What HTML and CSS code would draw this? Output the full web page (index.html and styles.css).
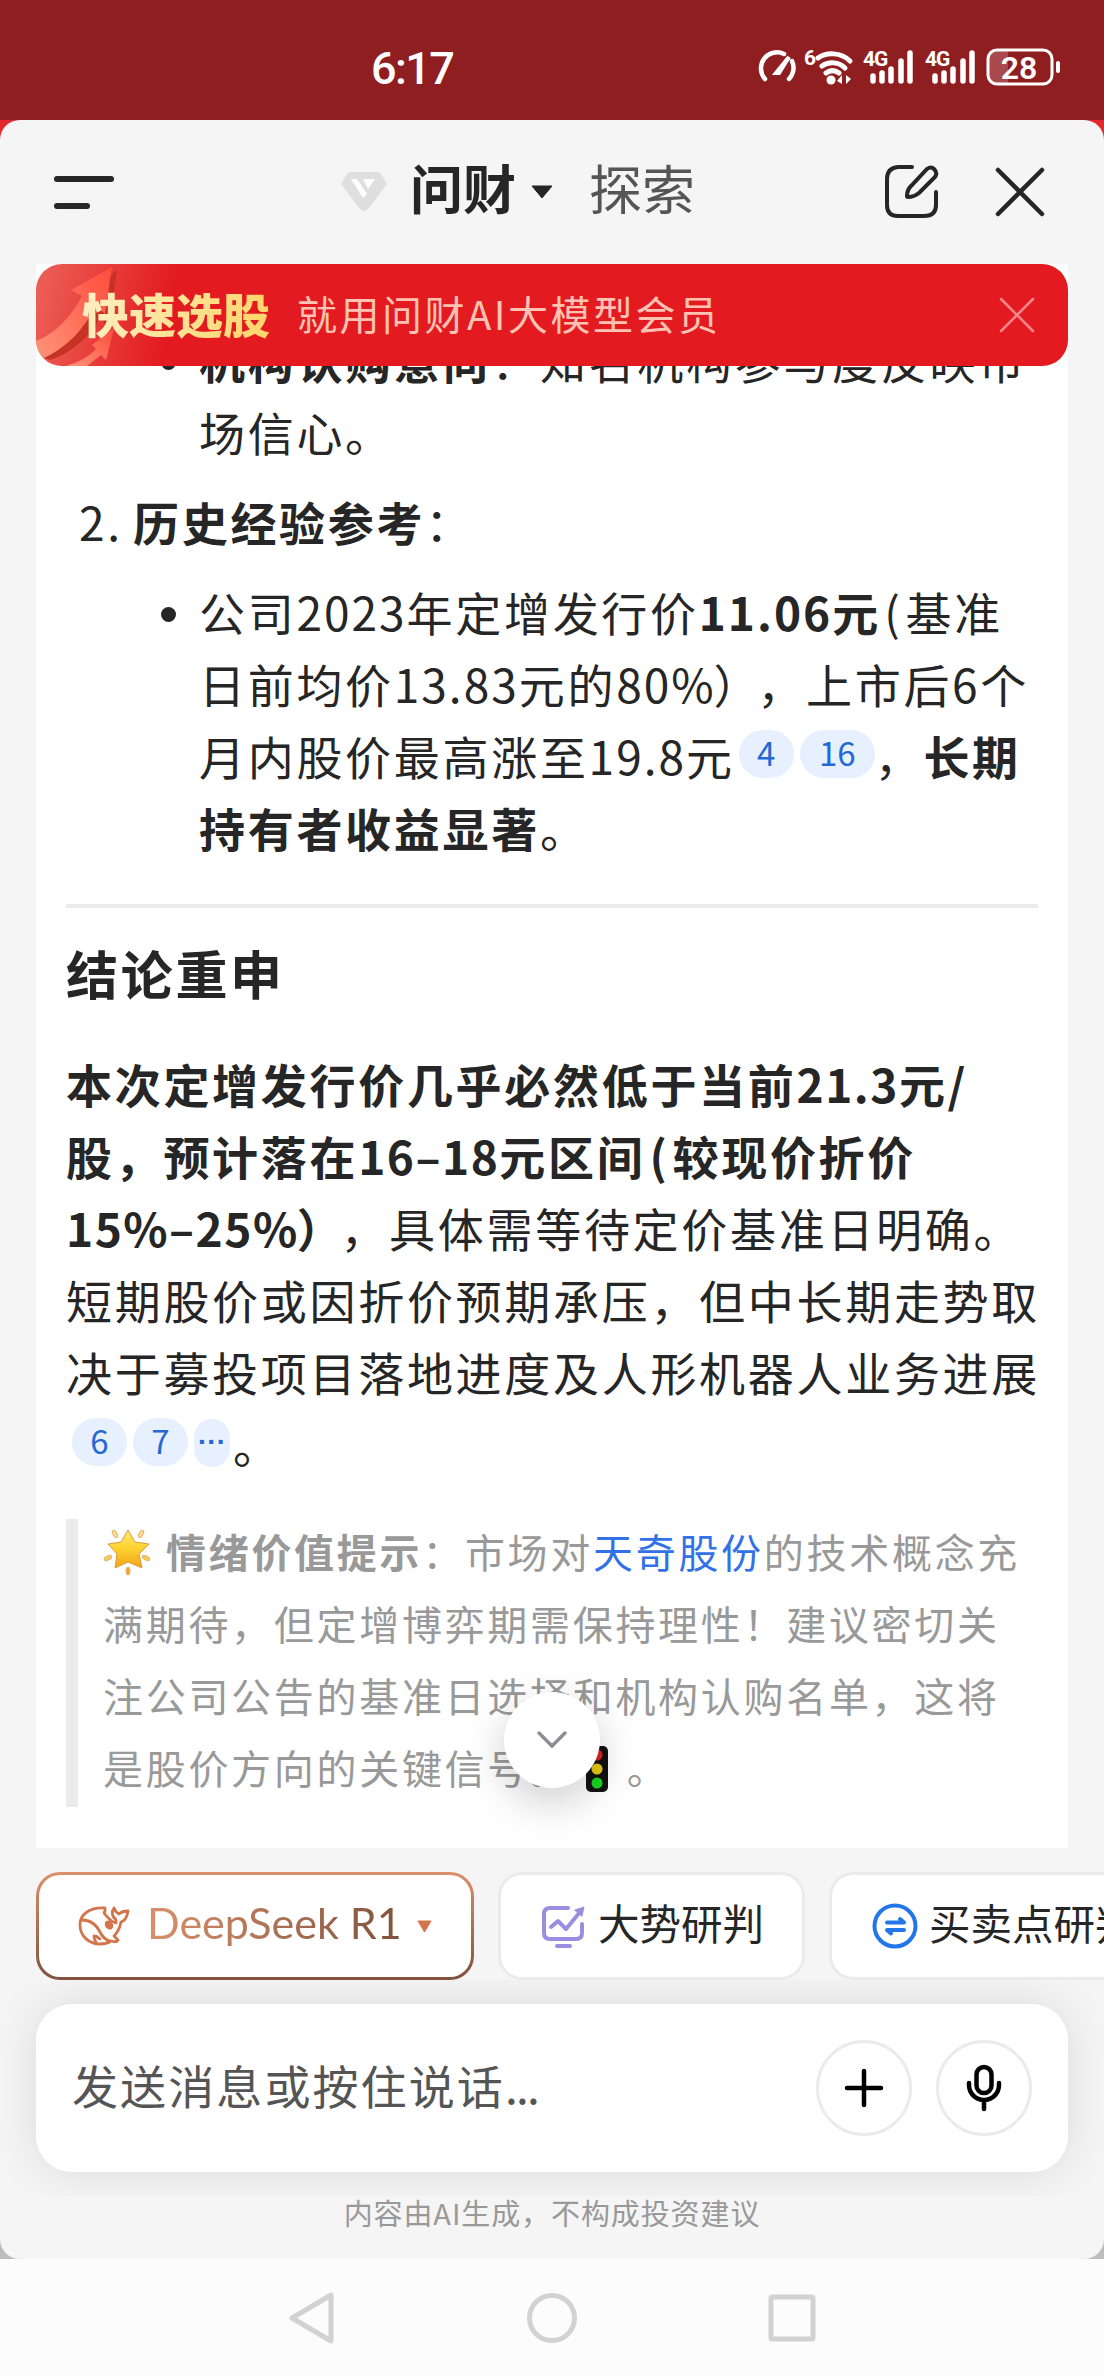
FILE: index.html
```
<!DOCTYPE html>
<html lang="zh-CN">
<head>
  <meta charset="UTF-8">
  <meta name="viewport" content="width=device-width, initial-scale=1.0">
  <title>问财</title>
  <link rel="stylesheet" href="styles.css">
</head>
<body>

  <div class="status-bar">
    <div class="clock">6:17</div>
    <svg class="status-icons" viewBox="755 40 310 55" fill="none" stroke="#fff" stroke-linecap="round">
      <path d="M765 79a16 16 0 0 1 19-25M792 61a16 16 0 0 1-3 18" stroke-width="4.5"/>
      <path d="M789 57L776 73l3 0z" stroke-width="4" fill="#fff"/>
      <path d="M818 58c8-6 23-6 32 3M822 66c7-5 17-4 23 2M826 73c4-3 9-3 13 0" stroke-width="5"/>
      <circle cx="831" cy="80" r="4.5" fill="#fff" stroke="none"/>
      <path d="M837 81l5-6v9M846 75v9l5-5z" fill="#fff" stroke="none"/>
      <text class="net" x="804" y="65">6</text>
      <text class="net" x="863" y="66">4G</text>
      <path d="M873 76v5M882 73v8M891 69v12M901 61v20M910 53v28" stroke-width="5.5"/>
      <text class="net" x="925" y="66">4G</text>
      <path d="M935 76v5M944 73v8M953 69v12M963 61v20M972 53v28" stroke-width="5.5"/>
      <path d="M1008 51h-12a7 7 0 0 0-7 7v18a7 7 0 0 0 7 7h12z" fill="#a9494e" stroke="none"/>
      <rect x="988" y="50" width="64" height="34" rx="9" stroke-width="3"/>
      <path d="M1058 63v8" stroke-width="4"/>
      <text class="level" x="1019" y="79">28</text>
    </svg>
  </div>

  <div class="app">
    <div class="sheet">
      <div class="header">
        <div class="menu"><span></span><span class="short"></span></div>
        <div class="tabs">
          <svg class="logo" width="46" height="42" viewBox="0 0 46 42">
            <path d="M9 1h28q2 0 3 2l6 10-19 25q-4 4-8 0L0 13 6 3q1-2 3-2z" fill="#dfdfdf"/>
            <path d="M10 8h6l10 15-4 4zM22 8h12l-7 10z" fill="#fff"/>
          </svg>
          <span class="tab active">问财</span>
          <svg class="caret" width="24" height="14" viewBox="0 0 24 14"><path d="M2 1h20L12 13z" fill="#262626" stroke="#262626" stroke-linejoin="round"/></svg>
          <span class="tab">探索</span>
        </div>
        <div class="actions">
          <svg width="56" height="56" viewBox="0 0 56 56" fill="none" stroke="#262626" stroke-width="4" stroke-linecap="round">
            <path d="M28 3H14Q3 4 3 15v26Q3 52 14 52h26Q52 52 52 41V28"/>
            <path d="M23 32q0-6 4-10L43 5q4-3 7 0 4 4 1 8L35 29q-5 4-11 4-1 0-1-1z"/>
          </svg>
          <svg width="50" height="50" viewBox="0 0 50 50" stroke="#262626" stroke-width="4.5" stroke-linecap="round"><path d="M3 3l44 44M47 3L3 47"/></svg>
        </div>
      </div>

      <div class="chat">
        <div class="banner">
          <svg class="arrow" width="120" height="102" viewBox="0 0 120 102">
            <defs>
              <linearGradient id="up" x1="0" y1="1" x2="1" y2="0">
                <stop offset="0" stop-color="#ff9478"/>
                <stop offset="1" stop-color="#ff4b3c"/>
              </linearGradient>
            </defs>
            <path d="M81 5l-8 62-8-14Q45 86 14 96l-8-3z" fill="#c63324"/>
            <path d="M76 3L35 26l11 6Q28 66 0 77v12l8 5Q42 78 60 41l9 9z" fill="url(#up)"/>
            <path d="M78 64l-8 32-5-5-14 11H30q20-6 30-17l-4-4z" fill="url(#up)"/>
          </svg>
          <b>快速选股</b>
          <span>就用问财AI大模型会员</span>
          <svg class="close" width="36" height="36" viewBox="0 0 36 36" stroke="#f7868a" stroke-width="2.5" stroke-linecap="round"><path d="M2 2l32 32M34 2L2 34"/></svg>
        </div>

        <ul>
          <li><strong>机构认购意向</strong>：知名机构参与度反映市<br>场信心。</li>
        </ul>
        <div class="ordered"><span class="num">2.</span><strong>历史经验参考</strong>：</div>
        <ul>
          <li>公司<span class="n">2023</span>年定增发行价<strong class="n">11.06元</strong><span class="lp">(</span>基准<br>日前均价<span class="n">13.83</span>元的<span class="n">80%</span><span class="rp">）</span>，上市后6个<br>月内股价最高涨至<span class="n">19.8</span>元<a class="cite first">4</a><a class="cite two">16</a>，<strong>长期<br>持有者收益显著</strong>。</li>
        </ul>
        <hr>
        <h3>结论重申</h3>
        <p><strong>本次定增发行价几乎必然低于当前<span class="n">21.3</span>元/<br>股，预计落在<span class="n">16–18</span>元区间<span class="lp">(</span>较现价折价<br><span class="n">15%–25%</span><span class="rp">）</span></strong>，具体需等待定价基准日明确。<br>短期股价或因折价预期承压，但中长期走势取<br>决于募投项目落地进度及人形机器人业务进展<br><a class="cite">6</a><a class="cite">7</a><a class="cite more">···</a>。</p>

        <blockquote>
          <p><svg class="star" width="48" height="48" viewBox="0 0 48 48">
            <defs>
              <linearGradient id="gold" x1="0" y1="0" x2="0" y2="1">
                <stop offset="0" stop-color="#ffe870"/>
                <stop offset="0.5" stop-color="#fdd22e"/>
                <stop offset="1" stop-color="#f3a21b"/>
              </linearGradient>
            </defs>
            <path d="M25 1l7 12 14 2-10 10 3 14-14-6-13 6 2-14L5 15l13-2z" fill="url(#gold)" stroke="#dc9a3c" stroke-linejoin="round"/>
            <g fill="#fbdc98" stroke="#e5b366">
              <ellipse cx="12" cy="5" rx="2" ry="4" transform="rotate(-30 12 5)"/>
              <ellipse cx="38" cy="5" rx="2" ry="4" transform="rotate(30 38 5)"/>
              <ellipse cx="5" cy="29" rx="2" ry="4" transform="rotate(65 5 29)" fill="#f7c85a"/>
              <ellipse cx="43" cy="29" rx="2" ry="4" transform="rotate(-65 43 29)" fill="#f7c85a"/>
              <ellipse cx="25" cy="42" rx="2" ry="4" fill="#f0a92a"/>
            </g>
          </svg><strong>情绪价值提示</strong>：市场对<a class="stock">天奇股份</a>的技术概念充<br>满期待，但定增博弈期需保持理性！建议密切关<br>注公司公告的基准日选择和机构认购名单，这将<br>是股价方向的关键信号。<svg class="light" width="48" height="48" viewBox="0 0 48 48">
            <rect x="13" y="1" width="22" height="46" rx="5" fill="#111"/>
            <circle cx="24" cy="10" r="5.5" fill="#e02020"/>
            <circle cx="24" cy="24" r="5.5" fill="#e8c814"/>
            <circle cx="24" cy="38" r="5.5" fill="#18d820"/>
          </svg>。</p>
        </blockquote>

        <div class="to-bottom">
          <svg width="32" height="20" viewBox="0 0 32 20" fill="none" stroke="#8c8f94" stroke-width="3.5" stroke-linecap="round"><path d="M3 3l13 13L29 3"/></svg>
        </div>
      </div>

      <div class="chips">
        <div class="chip deepseek">
          <svg class="whale" width="52" height="42" viewBox="0 0 52 42" fill="none" stroke="#d2754b" stroke-width="2.8" stroke-linejoin="round" stroke-linecap="round">
            <path d="M27 3C12 2 2 9 2 20c0 11 9 19 20 19 5 0 8-1 11-3 3 1 6 1 7-1l-4-4c4-4 6-9 7-14 4-1 6-5 7-11-4 0-7 1-9 3-2-1-4-3-5-6-3 4-2 8 2 12v3c-4-1-9-6-12-10l1-2z"/>
            <path d="M4 15c9 0 15 6 18 12 2 4 5 8 10 9M18 37c-2-2-2-5-2-6 3 0 5 2 6 3"/>
            <ellipse cx="31" cy="20" rx="2.5" ry="3.5" transform="rotate(-35 31 20)" fill="#d2754b"/>
          </svg>
          <span>DeepSeek R1</span>
          <svg width="15" height="13" viewBox="0 0 15 13"><path d="M1 1h13L7.500 12z" fill="#d2754b" stroke="#d2754b" stroke-linejoin="round"/></svg>
        </div>
        <div class="chip">
          <svg width="46" height="46" viewBox="0 0 46 46" fill="none" stroke="#9b8ee0" stroke-width="4" stroke-linecap="round" stroke-linejoin="round">
            <path d="M27 5H9Q3 5 3 11v19q0 6 6 6h26q6 0 6-6v-9M16 43h13"/>
            <path d="M10 24l7-6 8 8L39 9"/>
            <path d="M34 7l9-3-2 9z" fill="#9b8ee0" stroke-width="1"/>
          </svg>
          <span>大势研判</span>
        </div>
        <div class="chip">
          <svg width="46" height="46" viewBox="0 0 46 46" fill="none" stroke="#2376ea" stroke-width="4" stroke-linecap="round" stroke-linejoin="round">
            <circle cx="23" cy="23" r="20.5"/>
            <path d="M15 19.500h17l-4-3.500M32 27H15l4 3.500"/>
          </svg>
          <span>买卖点研判</span>
        </div>
      </div>

      <div class="composer">
        <div class="input-box">
          <div class="placeholder">发送消息或按住说话<span>...</span></div>
          <div class="round">
            <svg width="40" height="40" viewBox="0 0 40 40" stroke="#000" stroke-width="4.5" stroke-linecap="round"><path d="M20 3v34M3 20h34"/></svg>
          </div>
          <div class="round">
            <svg width="40" height="50" viewBox="0 0 40 50" fill="none" stroke="#000" stroke-width="4.5" stroke-linecap="round">
              <rect x="12.500" y="4" width="15" height="26" rx="7.500"/>
              <path d="M5 20v2a15 15 0 0 0 30 0v-2M20 38v8"/>
            </svg>
          </div>
        </div>
      </div>
      <div class="disclaimer">内容由AI生成，不构成投资建议</div>
    </div>
  </div>

  <div class="nav-bar">
    <svg width="50" height="54" viewBox="0 0 50 54"><path d="M5 27L44 4v46z"/></svg>
    <svg width="54" height="54" viewBox="0 0 54 54"><circle cx="27" cy="27" r="22.5"/></svg>
    <svg width="50" height="50" viewBox="0 0 50 50"><rect x="4" y="4" width="42" height="42" rx="1"/></svg>
  </div>

</body>
</html>
```

FILE: styles.css
```
* {
  box-sizing: border-box;
}

body {
  margin: 0;
  width: 1104px;
  height: 2376px;
  overflow: hidden;
  background: #fcfcfc;
  color: #262626;
  font-family: "Noto Sans CJK SC", sans-serif;
  text-spacing-trim: space-all;
}

svg {
  display: block;
  flex: none;
}

/* status bar */
.status-bar {
  display: flex;
  justify-content: space-between;
  height: 120px;
  padding: 40px 39px 0 371px;
  background: #8e1e20;
  color: #fff;
}

.clock {
  font: 500 45px/58px Roboto, sans-serif;
  letter-spacing: -1.6px;
}

.status-icons {
  width: 310px;
  height: 55px;
}

.status-icons text {
  fill: #fff;
  stroke: none;
  font-family: Roboto, sans-serif;
  font-weight: 700;
}

.status-icons .net {
  font-size: 21px;
  letter-spacing: -1px;
}

.status-icons .level {
  font-size: 32px;
  font-weight: 600;
  text-anchor: middle;
}

/* sheet */
.app {
  height: 2139px;
  background: linear-gradient(#e2292f 50%, #bdbdbd 50%);
}

.sheet {
  height: 2139px;
  overflow: hidden;
  border-radius: 20px;
  background: #f5f5f5;
}

.header {
  display: flex;
  align-items: center;
  justify-content: space-between;
  height: 144px;
  padding: 0 59px 0 54px;
}

.menu {
  width: 287px;
}

.menu span {
  display: block;
  width: 60px;
  height: 6px;
  margin-bottom: 21px;
  border-radius: 3px;
  background: #262626;
}

.menu .short {
  width: 36px;
  margin-bottom: 0;
}

.tabs {
  display: flex;
  flex: 1;
  align-items: center;
}

.tab {
  margin-top: -11px;
  color: #555;
  font-size: 53px;
  line-height: 72px;
}

.tab.active {
  margin-left: 23px;
  color: #262626;
  font-weight: 700;
}

.caret {
  margin: 0 35px 0 14px;
}

.actions {
  display: flex;
  align-items: center;
  gap: 55px;
}

/* conversation */
.chat {
  position: relative;
  height: 1584px;
  margin: 0 36px;
  padding: 59px 0 0 30px;
  background: #fff;
  font-size: 46px;
  line-height: 72px;
  letter-spacing: 2.7px;
  white-space: nowrap;
}

.banner {
  position: absolute;
  z-index: 1;
  top: 0;
  left: 0;
  display: flex;
  align-items: center;
  width: 1032px;
  height: 102px;
  padding: 0 33px 0 46px;
  overflow: hidden;
  border-radius: 26px;
  background: linear-gradient(100deg, #ec6159 0, #e8433f 60px, #e31b20 140px);
  color: #ffc2b3;
  font-size: 40px;
  letter-spacing: 2.5px;
}

.banner .arrow {
  position: absolute;
  top: 0;
  left: 0;
}

.banner b {
  position: relative;
  margin-right: 27px;
  background: linear-gradient(100deg, #fff0c4, #ffd568);
  -webkit-background-clip: text;
  background-clip: text;
  color: transparent;
  font-size: 47px;
  font-weight: 900;
  letter-spacing: 0;
}

.banner b,
.banner span {
  margin-top: -4px;
}

.banner .close {
  margin-left: auto;
}

ul {
  margin: 0;
  padding: 0 0 0 133px;
  list-style: none;
}

li {
  position: relative;
}

li::before {
  content: "";
  position: absolute;
  top: 32px;
  left: -38px;
  width: 15px;
  height: 15px;
  border-radius: 50%;
  background: #262626;
}

.ordered {
  margin: 18px 0;
  padding-left: 13px;
}

.num {
  display: inline-block;
  width: 54px;
}

.n {
  letter-spacing: 2px;
}

strong .n {
  letter-spacing: 1.5px;
}

.lp {
  margin: 0 3px 0 4px;
}

.rp {
  margin: 0 -5px 0 -2px;
}

.cite {
  display: inline-block;
  width: 55px;
  height: 48px;
  margin-left: 6px;
  border-radius: 24px;
  background: #e6f0ff;
  color: #2468d6;
  font-size: 33px;
  line-height: 45px;
  letter-spacing: 0;
  text-align: center;
  vertical-align: 9px;
}

.cite.first {
  margin-left: 4px;
}

.cite.two {
  width: 75px;
}

.cite.more {
  width: 36px;
  margin-right: 3px;
  font-family: "Liberation Sans", sans-serif;
  font-size: 28px;
  font-weight: 700;
  vertical-align: 12px;
}

hr {
  width: 972px;
  height: 4px;
  margin: 41px 0 29px;
  border: 0;
  background: #ebebeb;
}

h3 {
  margin: 0 0 38px;
  font-size: 52px;
  line-height: 72px;
}

p {
  margin: 0;
}

blockquote {
  display: flow-root;
  height: 288px;
  margin: 40px 0 0;
  padding-left: 25px;
  border-left: 12px solid #ebebeb;
  color: #999;
  font-size: 40px;
}

blockquote p {
  margin-top: -4px;
}

blockquote svg {
  display: inline-block;
  vertical-align: -9px;
}

.star {
  margin-right: 15px;
}

.light {
  margin-right: 6px;
}

.stock {
  color: #3371e6;
}

.to-bottom {
  position: absolute;
  top: 1428px;
  left: 468px;
  display: flex;
  align-items: center;
  justify-content: center;
  width: 96px;
  height: 96px;
  border-radius: 50%;
  background: #fff;
  box-shadow: 0 14px 44px rgba(0, 0, 0, 0.2);
}

/* quick actions */
.chips {
  display: flex;
  gap: 24px;
  height: 132px;
  padding: 24px 0 0 36px;
}

.chip {
  display: flex;
  flex: none;
  align-items: center;
  gap: 11px;
  height: 108px;
  padding: 0 38px 0 40px;
  border: 3px solid #ebebeb;
  border-radius: 24px;
  background: #fff;
  font-size: 41.5px;
  white-space: nowrap;
}

.chip span {
  margin-top: -8px;
}

.deepseek {
  width: 438px;
  gap: 17px;
  padding: 0 38px 0 39px;
  border-color: transparent;
  background: linear-gradient(#fff, #fff) padding-box, linear-gradient(#d9916b, #80523e) border-box;
}

.deepseek span {
  width: 253px;
  background: linear-gradient(90deg, #d9916b, #80523e);
  -webkit-background-clip: text;
  background-clip: text;
  color: transparent;
  font-family: Lato, sans-serif;
  font-size: 43px;
}

/* message input */
.composer {
  height: 216px;
  padding: 24px 36px;
  overflow: hidden;
}

.input-box {
  display: flex;
  align-items: center;
  gap: 24px;
  height: 168px;
  padding: 0 36px;
  border-radius: 36px;
  background: #fff;
  box-shadow: 0 0 48px rgba(0, 0, 0, 0.11);
}

.placeholder {
  flex: 1;
  margin-top: -8px;
  color: #555;
  font-size: 46px;
  letter-spacing: 2.1px;
}

.placeholder span {
  letter-spacing: -1.8px;
}

.round {
  display: flex;
  align-items: center;
  justify-content: center;
  width: 96px;
  height: 96px;
  border: 3px solid #ebebeb;
  border-radius: 50%;
}

.disclaimer {
  margin-top: -2px;
  color: #999;
  font-size: 29px;
  line-height: 36px;
  letter-spacing: 0.9px;
  text-align: center;
}

/* system navigation */
.nav-bar {
  display: flex;
  align-items: center;
  justify-content: center;
  gap: 188px;
  height: 117px;
}

.nav-bar svg {
  fill: none;
  stroke: #d2d2d2;
  stroke-width: 5;
  stroke-linejoin: round;
}
```
